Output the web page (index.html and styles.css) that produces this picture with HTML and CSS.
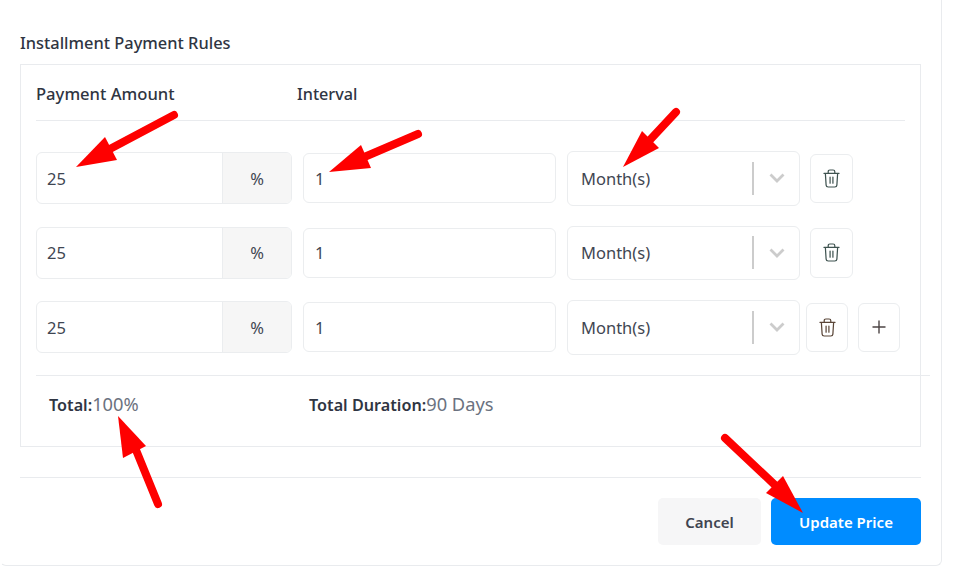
FILE: index.html
```html
<!DOCTYPE html>
<html lang="en">
<head>
<meta charset="utf-8">
<title>Installment Payment Rules</title>
<link rel="stylesheet" href="styles.css">
</head>
<body>
<main class="card">
  <h2 class="title">Installment Payment Rules</h2>
  <section class="box">
    <div class="head">
      <span class="head-amount">Payment Amount</span>
      <span class="head-interval">Interval</span>
    </div>
    <div class="rows">
      <div class="row">
        <div class="group"><span class="value">25</span><span class="addon">%</span></div>
        <div class="input"><span>1</span></div>
        <div class="select"><span class="select-text">Month(s)</span><span class="select-sep"></span>
          <svg class="chevron" viewBox="0 0 16 10"><path d="M1.500 1.500 8 8l6.500-6.500"/></svg></div>
        <button class="icon-btn"><svg class="trash" viewBox="0 0 18 20"><path d="M1 4.500h16M5.500 4.500V2.800Q5.500 1 7.300 1h3.400q1.800 0 1.800 1.800v1.700M2.500 4.500l.8 12.500q.1 2 2.200 2h7q2.100 0 2.200-2l.8-12.500M7.500 8.500v6.500M10.500 8.500v6.500"/></svg></button>
      </div>
      <div class="row">
        <div class="group"><span class="value">25</span><span class="addon">%</span></div>
        <div class="input"><span>1</span></div>
        <div class="select"><span class="select-text">Month(s)</span><span class="select-sep"></span>
          <svg class="chevron" viewBox="0 0 16 10"><path d="M1.500 1.500 8 8l6.500-6.500"/></svg></div>
        <button class="icon-btn"><svg class="trash" viewBox="0 0 18 20"><path d="M1 4.500h16M5.500 4.500V2.800Q5.500 1 7.300 1h3.400q1.800 0 1.800 1.800v1.700M2.500 4.500l.8 12.500q.1 2 2.200 2h7q2.100 0 2.200-2l.8-12.500M7.500 8.500v6.500M10.500 8.500v6.500"/></svg></button>
      </div>
      <div class="row row-last">
        <div class="group"><span class="value">25</span><span class="addon">%</span></div>
        <div class="input"><span>1</span></div>
        <div class="select"><span class="select-text">Month(s)</span><span class="select-sep"></span>
          <svg class="chevron" viewBox="0 0 16 10"><path d="M1.500 1.500 8 8l6.500-6.500"/></svg></div>
        <button class="icon-btn"><svg class="trash" viewBox="0 0 18 20"><path d="M1 4.500h16M5.500 4.500V2.800Q5.500 1 7.300 1h3.400q1.800 0 1.800 1.800v1.700M2.500 4.500l.8 12.500q.1 2 2.200 2h7q2.100 0 2.200-2l.8-12.500M7.500 8.500v6.500M10.500 8.500v6.500"/></svg></button>
        <button class="icon-btn"><svg class="plus" viewBox="0 0 14 14"><path d="M7 .5v13M.5 7h13"/></svg></button>
      </div>
    </div>
    <div class="totals">
      <p class="total"><b>Total:</b><span>100%</span></p>
      <p><b>Total Duration:</b><span>90 Days</span></p>
    </div>
  </section>
  <footer class="actions">
    <button class="btn btn-cancel">Cancel</button>
    <button class="btn btn-primary">Update Price</button>
  </footer>
</main>
<svg class="arrows" viewBox="0 0 960 574" aria-hidden="true">
  <g class="shaft">
    <path d="M174 115 108 150"/>
    <path d="M418 134 362 158"/>
    <path d="M676 112 648 142"/>
    <path d="M158 504 136 450"/>
    <path d="M725 438 777 487"/>
  </g>
  <g class="head-tip">
    <path d="M76 167 105 137 117 160Z"/>
    <path d="M329 172 361 145 371 168Z"/>
    <path d="M623 167 642 131 659 148Z"/>
    <path d="M118 416 123 458 146 446Z"/>
    <path d="M803 513 766 493 783 476Z"/>
  </g>
</svg>
</body>
</html>
```
FILE: styles.css
```css
* { box-sizing: border-box; }
html, body { margin: 0; background: #fff; }
body {
  width: 960px;
  height: 574px;
  overflow: hidden;
  position: relative;
  font-family: "Noto Sans", "Open Sans", sans-serif;
  font-size: 16.500px;
  color: #3f4652;
}
.card {
  width: 942px;
  height: 566px;
  padding: 31px 20px 20px;
  border: 1px solid #e9ebee;
  border-top: 0;
  border-left-color: #fff;
  border-radius: 0 0 6px 6px;
}
.title {
  margin: 0 0 9px -1px;
  font-size: 16.400px;
  line-height: 24px;
  font-weight: 500;
  color: #2f3542;
}
.box {
  margin-left: -1px;
  width: 901px;
  height: 383px;
  border: 1px solid #e9ebee;
  padding: 0 15px;
}
.head {
  display: flex;
  align-items: center;
  height: 56px;
  padding-top: 2px;
  font-weight: 500;
  font-size: 16.600px;
  color: #2f3542;
  border-bottom: 1px solid #e9ebee;
}
.head-amount { width: 261px; }
.head-interval { font-size: 16.200px; }
.rows {
  display: flex;
  flex-direction: column;
  gap: 20px;
  margin-top: 30px;
}
.row {
  display: flex;
  align-items: center;
  height: 54.500px;
}
.group {
  width: 256px;
  height: 52px;
  display: flex;
  border: 1px solid #ebedef;
  border-radius: 6px;
  overflow: hidden;
  margin-right: 11px;
}
.value {
  flex: 1;
  display: flex;
  align-items: center;
  padding-left: 10px;
}
.addon {
  width: 69px;
  display: flex;
  align-items: center;
  justify-content: center;
  background: #f6f6f6;
  border-left: 1px solid #ebedef;
}
.input {
  width: 253px;
  height: 50px;
  display: flex;
  align-items: center;
  padding-left: 11px;
  border: 1px solid #ebedef;
  border-radius: 6px;
  margin-right: 11px;
}
.select {
  width: 233px;
  height: 54.500px;
  display: flex;
  align-items: center;
  padding-left: 13px;
  border: 1px solid #ebedef;
  border-radius: 6px;
  margin-right: 10px;
}
.select-text { width: 171px; }
.select-sep {
  width: 2px;
  height: 33px;
  background: #cccccc;
}
.chevron {
  width: 16px;
  height: 10px;
  margin-left: 15px;
  fill: none;
  stroke: #cccccc;
  stroke-width: 2.800;
}
.icon-btn {
  width: 43px;
  height: 49.500px;
  display: flex;
  align-items: center;
  justify-content: center;
  padding: 0;
  border: 1px solid #ebedef;
  border-radius: 6px;
  background: #fff;
}
.row-last .select { margin-right: 6px; }
.row-last .icon-btn { width: 42px; margin-right: 10px; }
.row-last .icon-btn:last-child { margin-right: 0; }
.trash {
  width: 17px;
  height: 19px;
  fill: none;
  stroke: #3f5350;
  stroke-width: 1.300;
  stroke-linecap: round;
}
.row-last .trash { stroke: #5a4638; }
.plus {
  width: 14px;
  height: 14px;
  fill: none;
  stroke: #4c4444;
  stroke-width: 1.400;
}
.totals {
  display: flex;
  align-items: center;
  height: 71px;
  margin: 20px -25px 0 0;
  padding: 0 0 14px 13px;
  border-top: 1px solid #e9ebee;
  font-size: 16.200px;
}
.totals p { margin: 0; }
.totals b { font-weight: 600; color: #2f3542; }
.totals span { color: #6b7280; font-size: 18.300px; }
.total { width: 260px; }
.actions {
  display: flex;
  justify-content: flex-end;
  gap: 10px;
  width: 901px;
  margin: 30px 0 0 -1px;
  padding-top: 20px;
  border-top: 1px solid #e9ebee;
}
.btn {
  height: 47px;
  border: 0;
  border-radius: 5px;
  font-family: inherit;
  font-size: 15px;
  font-weight: 600;
}
.btn-cancel { width: 103px; background: #f6f6f7; color: #3f4450; }
.btn-primary { width: 150px; background: #008cff; color: #fff; }
.arrows {
  position: absolute;
  left: 0;
  top: 0;
  width: 960px;
  height: 574px;
  pointer-events: none;
}
.shaft path {
  fill: none;
  stroke: #fe0000;
  stroke-width: 8;
  stroke-linecap: round;
}
.head-tip path { fill: #fe0000; }
```
